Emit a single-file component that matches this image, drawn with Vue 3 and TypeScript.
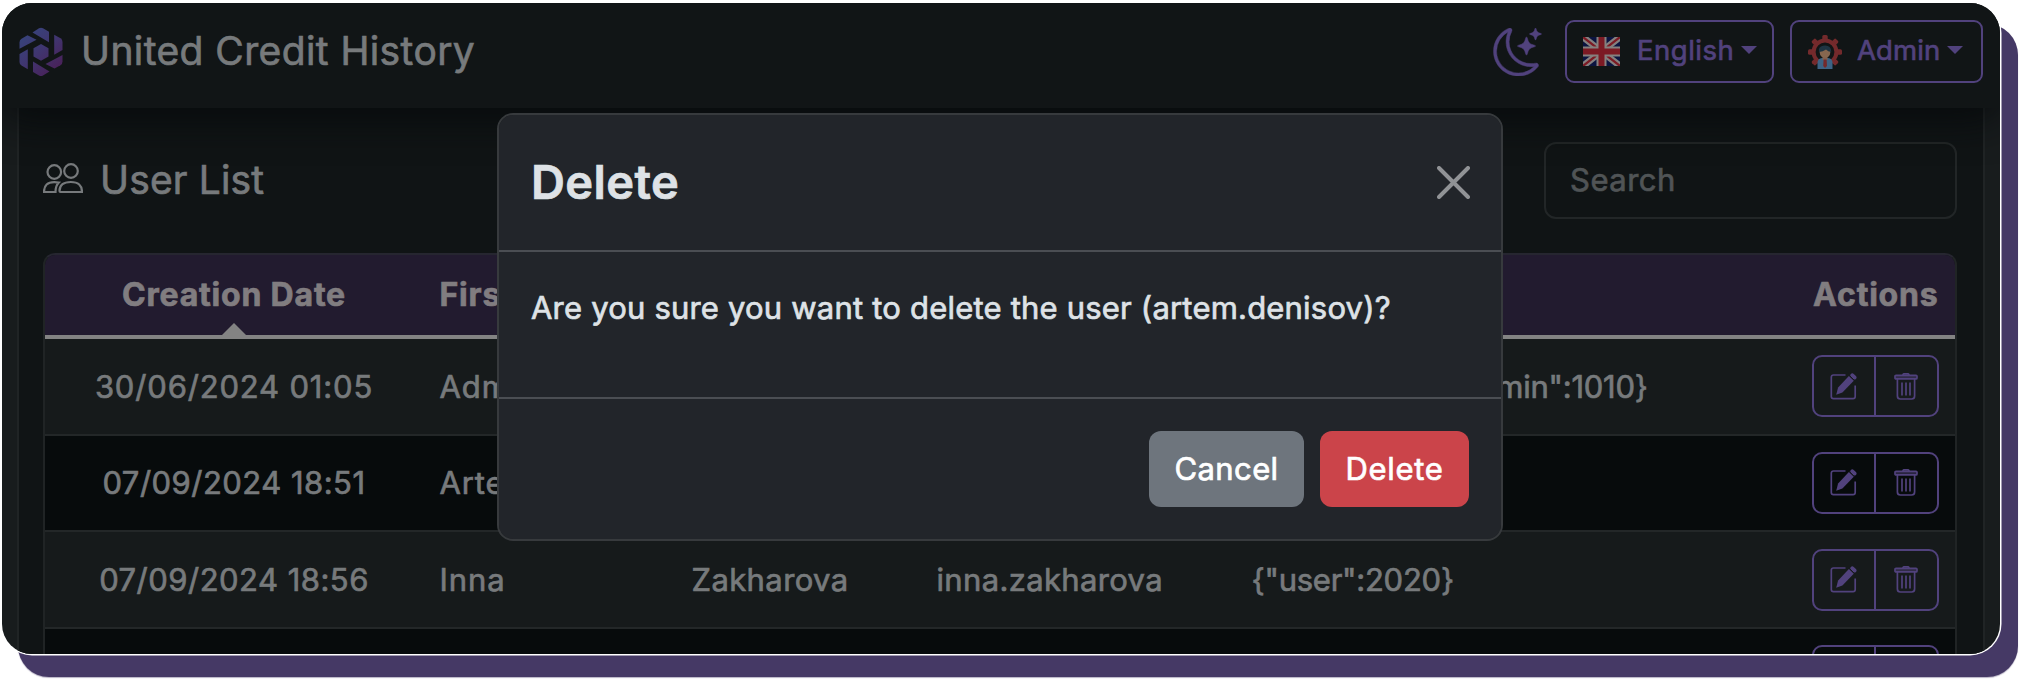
<script setup lang="ts">
interface UserRow {
  created: string
  first: string
  last: string
  login: string
  roles: string
}

const users: UserRow[] = [
  { created: '30/06/2024 01:05', first: 'Admin', last: 'Admin', login: 'admin', roles: '{"user":2020,"admin":1010}' },
  { created: '07/09/2024 18:51', first: 'Artem', last: 'Denisov', login: 'artem.denisov', roles: '{"user":2020}' },
  { created: '07/09/2024 18:56', first: 'Inna', last: 'Zakharova', login: 'inna.zakharova', roles: '{"user":2020}' },
  { created: '', first: '', last: '', login: '', roles: '' },
]

const teeth = [0, 45, 90, 135, 180, 225, 270, 315]
</script>

<template>
  <div class="page">
    <div class="window">
      <header class="navbar">
        <svg class="logo" viewBox="0 0 44 50">
          <defs>
            <linearGradient id="logoFill" gradientUnits="userSpaceOnUse" x1="4" y1="8" x2="36" y2="44">
              <stop offset="0" stop-color="#37437b" />
              <stop offset="0.5" stop-color="#40356f" />
              <stop offset="1" stop-color="#492159" />
            </linearGradient>
          </defs>
          <g fill="url(#logoFill)">
            <path d="M22 17 L29.5 21.2 V29.5 L22 33.8 L14.500 29.500 V21.200 Z" />
            <path d="M13.500 5.400 L20 1.300 Q22 .3 24 1.300 L30 4.800 V15.300 Z" />
            <path d="M35.200 7.700 L41.500 11.300 Q43.500 12.500 43.500 15 V23 L35.200 27.800 Z" />
            <path d="M43.500 28 V34.500 Q43.500 37 41.500 38.200 L35.500 41.600 L26.500 37 Z" />
            <path d="M30.500 44.500 L24 48.500 Q22 49.500 20 48.500 L14 45 V34.500 Z" />
            <path d="M8.800 42.200 L2.500 38.600 Q.5 37.500 .5 35 V27 L8.800 22.200 Z" />
            <path d="M.5 21.800 V15.400 Q.5 13 2.500 11.800 L8.500 8.300 L17.500 12.700 Z" />
          </g>
        </svg>
        <span class="brand">United Credit History</span>
        <svg class="moon" viewBox="0 0 16 16" fill="#51427d" stroke="#51427d" stroke-width=".15">
          <path d="M6 .278a.77.77 0 0 1 .08.858 7.200 7.200 0 0 0-.878 3.460c0 4.021 3.278 7.277 7.318 7.277q.792-.001 1.533-.16a.79.79 0 0 1 .81.316.73.73 0 0 1-.031.893A8.350 8.350 0 0 1 8.344 16C3.734 16 0 12.286 0 7.710 0 4.266 2.114 1.312 5.124.06A.75.75 0 0 1 6 .278M4.858 1.311A7.270 7.270 0 0 0 1.025 7.710c0 4.020 3.279 7.276 7.319 7.276a7.320 7.320 0 0 0 5.205-2.162q-.506.063-1.029.063c-4.610 0-8.343-3.714-8.343-8.290 0-1.167.242-2.278.681-3.286" />
          <path d="M10.794 3.148a.217.217 0 0 1 .412 0l.387 1.162c.173.518.579.924 1.097 1.097l1.162.387a.217.217 0 0 1 0 .412l-1.162.387a1.730 1.730 0 0 0-1.097 1.097l-.387 1.162a.217.217 0 0 1-.412 0l-.387-1.162A1.730 1.730 0 0 0 9.310 6.593l-1.162-.387a.217.217 0 0 1 0-.412l1.162-.387a1.730 1.730 0 0 0 1.097-1.097zM13.863.099a.145.145 0 0 1 .274 0l.258.774c.115.346.386.617.732.732l.774.258a.145.145 0 0 1 0 .274l-.774.258a1.160 1.160 0 0 0-.732.732l-.258.774a.145.145 0 0 1-.274 0l-.258-.774a1.160 1.160 0 0 0-.732-.732l-.774-.258a.145.145 0 0 1 0-.274l.774-.258c.346-.115.617-.386.732-.732z" />
        </svg>
        <button class="dropdown language">
          <svg class="flag" viewBox="0 0 37 29">
            <rect width="37" height="29" fill="#0b1440" />
            <path d="M0 0 L37 29 M37 0 L0 29" stroke="#85807f" stroke-width="6.500" />
            <path d="M0 0 L37 29 M37 0 L0 29" stroke="#7c1a24" stroke-width="2.200" />
            <path d="M18.500 0 V29 M0 14.500 H37" stroke="#85807f" stroke-width="10" />
            <path d="M18.500 0 V29 M0 14.500 H37" stroke="#7c1a24" stroke-width="6" />
          </svg>
          <span class="english">English</span>
          <i class="caret"></i>
        </button>
        <button class="dropdown account">
          <svg class="avatar" viewBox="0 0 34 34">
            <g fill="#742a2c">
              <rect v-for="a in teeth" :key="a" x="14.300" y="0" width="5.400" height="6" rx="1.500" :transform="`rotate(${a} 17 17)`" />
            </g>
            <circle cx="17" cy="17" r="11.400" fill="#111516" stroke="#742a2c" stroke-width="4" />
            <path d="M9.500 34 V28 Q9.500 23.500 14 23 H20 Q24.500 23.500 24.500 28 V34 Z" fill="#3d6385" />
            <rect x="14.500" y="20" width="5" height="5" fill="#80604f" />
            <circle cx="17" cy="17.500" r="5.300" fill="#86674f" />
            <path d="M11 17 Q10 11.500 15 10.800 Q23 9.500 23.300 17 Q20 16.500 18 14.500 Q15 16.500 11 17 Z" fill="#1f3442" />
            <path d="M15.600 24.500 H18.600 L19 31 L17 33 L15.200 31 Z" fill="#742a2c" />
          </svg>
          <span class="admin">Admin</span>
          <i class="caret"></i>
        </button>
      </header>

      <main class="content">
        <div class="toolbar">
          <svg class="people" viewBox="0 0 40 31" fill="none" stroke="#777a7c" stroke-width="2.200">
            <circle cx="11.300" cy="9" r="6.800" />
            <circle cx="28" cy="8" r="6.800" />
            <path d="M17.500 29 H39 Q39 19 27.800 19 Q16.500 19 16.500 28 Q16.500 29 17.500 29 Z" />
            <path d="M12.500 29 H1 Q1 19 11.500 19.200 L15.800 19.600 Q12.500 23 12.500 29 Z" />
          </svg>
          <h1 class="heading">User List</h1>
          <div class="search"><span>Search</span></div>
        </div>

        <div class="table">
          <div class="row head">
            <div class="cell date"><span>Creation Date</span></div>
            <div class="cell">First Name</div>
            <div class="cell">Last Name</div>
            <div class="cell">Username</div>
            <div class="cell">Roles</div>
            <div class="cell actions">Actions</div>
            <i class="sort"></i>
          </div>
          <div v-for="(user, index) in users" :key="index" class="row body">
            <div class="cell date">{{ user.created }}</div>
            <div class="cell first">{{ user.first }}</div>
            <div class="cell last">{{ user.last }}</div>
            <div class="cell login">{{ user.login }}</div>
            <div class="cell roles">{{ user.roles }}</div>
            <div class="cell actions">
              <div class="group">
                <button class="icon-button">
                  <svg viewBox="0 0 27 27" fill="none" stroke="#51427d">
                    <path d="M15.500 2 H3.500 Q1.300 2 1.300 4.200 V23.500 Q1.300 25.700 3.500 25.700 H23 Q25.200 25.700 25.200 23.500 V12.500" stroke-width="1.700" />
                    <path d="M18.900 2.900 L23.800 7.800 L12.400 19.400 L6.200 21.800 L8.100 14.600 Z" fill="#51427d" stroke="none" />
                    <path d="M22.300 2.300 L24.500 4.500" stroke-width="4" stroke-linecap="round" />
                    <path d="M19.300 2.300 L24.600 7.600" stroke="#161a1b" stroke-width="1" />
                  </svg>
                </button>
                <button class="icon-button trash">
                  <svg viewBox="0 0 24 27" fill="none" stroke="#51427d" stroke-width="1.700">
                    <path d="M9 2 Q9 .8 10.200 .8 H13.800 Q15 .8 15 2" />
                    <rect x="1" y="2.300" width="22" height="3.600" rx="1" fill="#51427d" fill-opacity=".45" />
                    <path d="M3.400 6 V23 Q3.400 26 6.400 26 H17.600 Q20.600 26 20.600 23 V6" />
                    <path d="M8 9.500 V22.500 M12 9.500 V22.500 M16 9.500 V22.500" />
                  </svg>
                </button>
              </div>
            </div>
          </div>
        </div>
      </main>

      <section class="modal">
        <header class="modal-head">
          <h2>Delete</h2>
          <svg class="close" viewBox="0 0 33 33" stroke="#919396" stroke-width="4" stroke-linecap="round">
            <path d="M2 2 L31 31 M31 2 L2 31" />
          </svg>
        </header>
        <p class="modal-body">Are you sure you want to delete the user (artem.denisov)?</p>
        <footer class="modal-foot">
          <button class="cancel">Cancel</button>
          <button class="delete">Delete</button>
        </footer>
      </section>
    </div>
  </div>
</template>

<style>
body {
  background: #fff;
}
</style>

<style scoped>
* {
  box-sizing: border-box;
}

.page {
  width: 2020px;
  height: 680px;
  padding: 3px 0 0 2px;
  overflow: hidden;
  font-family: Inter, Roboto, sans-serif;
  font-size: 31px;
  color: #777a7c;
  -webkit-text-stroke: 0.7px currentColor;
}

button {
  font: inherit;
  color: inherit;
  background: none;
  padding: 0;
  margin: 0;
}

.window {
  position: relative;
  display: flex;
  flex-direction: column;
  width: 1998px;
  height: 651px;
  border-radius: 30px;
  overflow: hidden;
  background: #181c1d;
  box-shadow: 0 0 0 1.500px #fff, 17px 22px 0 1px #453965, 17px 23px 1px 1px #b9b4c6;
}

.navbar {
  position: relative;
  z-index: 1;
  display: flex;
  align-items: center;
  flex: 0 0 105px;
  padding: 0 17px 8px 17px;
  background: #111516;
  box-shadow: 0 6px 44px #06090b;
}

.logo {
  width: 44px;
  height: 50px;
}

.brand {
  margin-left: 18px;
  margin-top: -3px;
  font-size: 39px;
  letter-spacing: 0.400px;
}

.moon {
  width: 49px;
  height: 48px;
  margin-left: auto;
  margin-right: 23px;
}

.dropdown {
  display: flex;
  align-items: center;
  height: 63px;
  border: 2px solid #51427d;
  border-radius: 9px;
  color: #51427d;
  font-size: 27.500px;
}

.language {
  width: 209px;
  padding-left: 16px;
  margin-right: 16px;
}

.account {
  width: 193px;
  padding-left: 16px;
}

.flag {
  width: 37px;
  height: 29px;
  margin-right: 17px;
}

.avatar {
  width: 34px;
  height: 34px;
  margin-right: 15px;
}

.english,
.admin {
  margin-top: -3px;
}

.english {
  letter-spacing: 0.500px;
}

.admin {
  letter-spacing: 0.100px;
}

.caret {
  width: 0;
  margin: 0 0 4px 7px;
  border: 8px solid transparent;
  border-top-color: #51427d;
  border-bottom: 0;
}

.content {
  flex: 1;
  min-height: 0;
  margin: 0 15px;
  padding: 34px 26px 0 24px;
  border: solid #202425;
  border-width: 0 2px;
  background: #101415;
}

.toolbar {
  display: flex;
  align-items: center;
  height: 77px;
  margin-bottom: 34px;
}

.people {
  width: 40px;
  height: 31px;
  margin-top: -5px;
}

.heading {
  margin: -3px 0 0 17px;
  font-size: 39px;
  font-weight: 400;
  letter-spacing: 0.150px;
}

.search {
  display: flex;
  align-items: center;
  width: 413px;
  height: 77px;
  margin-left: auto;
  padding: 0 0 2px 24px;
  border: 2px solid #222627;
  border-radius: 12px;
  color: #505456;
  letter-spacing: 0.500px;
}

.table {
  border: 2px solid #27272c;
  border-color: #262630 #202425 #202425;
  border-radius: 12px 12px 0 0;
  overflow: hidden;
}

.row {
  display: grid;
  grid-template-columns: 378px 252px 245px 315px 1fr 200px;
  border-bottom: 2px solid #232728;
}

.cell {
  display: flex;
  align-items: center;
  padding: 0 0 0 16.500px;
  white-space: nowrap;
}

.head {
  position: relative;
  height: 84px;
  border-bottom: 4px solid #838383;
  background: #221b2f;
  color: #817d80;
  font-size: 32px;
  font-weight: 700;
  letter-spacing: 0.800px;
}

.head .cell {
  padding-bottom: 1px;
}

.cell.date {
  justify-content: center;
  padding-left: 0;
  letter-spacing: 0.480px;
}

.head .cell.date {
  letter-spacing: 0.800px;
}

.body:nth-child(2) .cell.date {
  letter-spacing: 0.830px;
}

.sort {
  position: absolute;
  left: 177px;
  bottom: 0;
  border: 12px solid transparent;
  border-bottom-color: #838383;
  border-top: 0;
}

.body {
  height: 96.670px;
  background: #161a1b;
}

.body:nth-child(odd) {
  background: #070b0c;
}

.first {
  letter-spacing: 0.900px;
}

.last {
  letter-spacing: 0.400px;
}

.login {
  letter-spacing: 0.350px;
}

.roles {
  letter-spacing: -0.250px;
}

.cell.actions {
  justify-content: flex-end;
  padding-right: 16.500px;
}

.group {
  display: flex;
  width: 127px;
  height: 62px;
  border: 2px solid #51427d;
  border-radius: 10px;
}

.icon-button {
  display: flex;
  align-items: center;
  justify-content: center;
  flex: 1;
  border: 0;
}

.icon-button.trash {
  border-left: 2px solid #51427d;
}

.icon-button svg {
  width: 27px;
  height: 27px;
}

.icon-button.trash svg {
  width: 24px;
}

.modal {
  position: absolute;
  z-index: 2;
  left: 495px;
  top: 110px;
  width: 1006px;
  height: 428px;
  border: 2px solid #373a3d;
  border-radius: 16px;
  background: #22252a;
  background-clip: padding-box;
  color: #dee2e6;
}

.modal-head {
  display: flex;
  align-items: center;
  justify-content: space-between;
  height: 137px;
  padding: 0 31px 0 32px;
  border-bottom: 2px solid #4b4e53;
}

.modal-head h2 {
  margin: -3px 0 0;
  font-size: 47px;
  font-weight: 600;
  letter-spacing: 0.400px;
}

.close {
  width: 33px;
  height: 33px;
}

.modal-body {
  height: 145px;
  margin: 0;
  padding: 36px 32px 0;
  line-height: 40px;
  letter-spacing: 0.200px;
}

.modal-foot {
  display: flex;
  align-items: center;
  justify-content: flex-end;
  gap: 16px;
  height: 142px;
  padding: 0 32px;
  border-top: 2px solid #4b4e53;
  color: #fff;
}

.modal-foot button {
  height: 76px;
  padding-bottom: 2px;
  border: 0;
  border-radius: 12px;
}

.modal-foot .cancel {
  width: 155px;
  background: #6e757d;
  letter-spacing: 0.400px;
}

.modal-foot .delete {
  width: 149px;
  background: #cb444a;
  letter-spacing: 0.700px;
}
</style>
